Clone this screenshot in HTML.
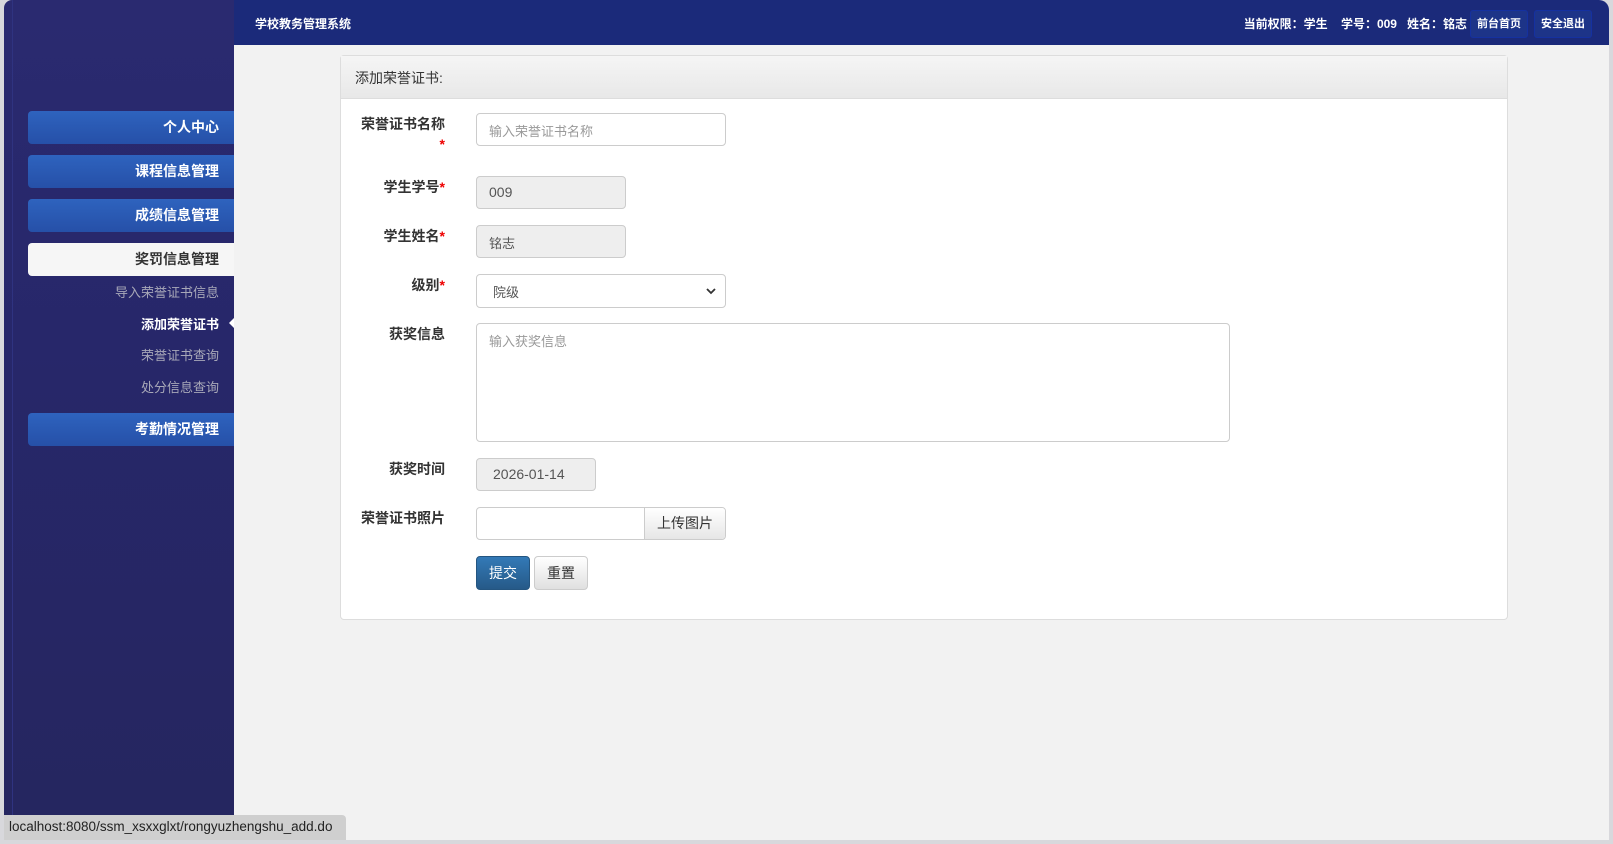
<!DOCTYPE html>
<html><head><meta charset="utf-8">
<style>
*{box-sizing:border-box;margin:0;padding:0}
body{width:1613px;height:844px;overflow:hidden;background:#d8d8dc;font-family:"Liberation Sans","Noto Sans CJK SC",sans-serif;position:relative}
.side{position:absolute;left:4px;top:0;width:230px;height:840px;background:linear-gradient(180deg,#2a2a70 0%,#27276a 40%,#25265f 100%);border-top-left-radius:8px}
.side:before{content:"";position:absolute;left:8px;top:0;bottom:0;width:1px;background:#2f3380}
.main{position:absolute;left:234px;top:0;width:1375px;height:840px;background:#f2f2f2;border-top-right-radius:10px}
.hdr{position:absolute;left:0;top:0;right:0;height:45px;background:#1b2a7a;border-top-right-radius:10px}
.hdr .t{position:absolute;left:21px;top:15px;color:#fff;font-size:12px;font-weight:bold}
.hdr .info{position:absolute;right:142px;top:15px;color:#fff;font-size:12px;font-weight:bold}
.hb{position:absolute;top:10px;height:28px;width:58px;border:1px solid #1531a0;border-radius:3px;background:#1d3488;color:#fff;font-size:11px;font-weight:bold;text-align:center;line-height:26px}
.nb{position:absolute;left:24px;width:206px;height:33px;border-radius:4px 0 0 4px;background:linear-gradient(180deg,#2e63be,#2650a8);color:#fff;font-size:14px;font-weight:bold;text-align:right;padding-right:15px;line-height:33px}
.nb.on{background:#f6f6f6;color:#333}
.sub{position:absolute;right:15px;font-size:13px;color:#a8a8b8;text-align:right}
.sub.on{color:#fff;font-weight:bold}
.panel{position:absolute;left:106px;top:55px;width:1168px;height:565px;background:#fff;border:1px solid #ddd;border-radius:4px}
.ph{height:43px;background:linear-gradient(#f5f5f5,#e8e8e8);border-bottom:1px solid #ddd;font-size:14px;color:#333;padding:12px 14px}
.lb{position:absolute;right:1062px;font-size:14px;font-weight:bold;color:#333;text-align:right}
.st{color:#e00}
.in{position:absolute;left:135px;height:33px;border:1px solid #ccc;border-radius:4px;background:#fff;font-size:14px;color:#555;padding:7px 12px}
.in.ro{background:#eee}
.ph2{color:#999;font-size:13px}
.btn{position:absolute;height:34px;border-radius:4px;font-size:14px;text-align:center;line-height:32px}
.status{position:absolute;left:4px;top:815px;width:342px;height:25px;background:#cfcfcf;border-top-right-radius:4px;font-size:13.5px;color:#222;padding:4px 5px}
</style></head><body>
<div class="side">
<div class="nb" style="top:111px">个人中心</div>
<div class="nb" style="top:155px">课程信息管理</div>
<div class="nb" style="top:199px">成绩信息管理</div>
<div class="nb on" style="top:243px">奖罚信息管理</div>
<div class="sub" style="top:282px">导入荣誉证书信息</div>
<div class="sub on" style="top:314px">添加荣誉证书</div>
<div style="position:absolute;left:225px;top:318px;width:0;height:0;border-top:5px solid transparent;border-bottom:5px solid transparent;border-right:5px solid #fff"></div>
<div class="sub" style="top:345px">荣誉证书查询</div>
<div class="sub" style="top:377px">处分信息查询</div>
<div class="nb" style="top:413px">考勤情况管理</div>
</div>
<div class="main">
<div class="hdr"><div class="t">学校教务管理系统</div>
<div class="info">当前权限：学生 &nbsp;&nbsp; 学号：009 &nbsp;&nbsp;姓名：铭志</div>
<div class="hb" style="left:1236px">前台首页</div>
<div class="hb" style="left:1300px">安全退出</div></div>
<div class="panel">
<div class="ph">添加荣誉证书:</div>
<div class="lb" style="top:58px;line-height:20px">荣誉证书名称<br><span class="st">*</span></div>
<div class="in" style="top:57px;width:250px"><span class="ph2">输入荣誉证书名称</span></div>
<div class="lb" style="top:121px">学生学号<span class="st">*</span></div>
<div class="in ro" style="top:120px;width:150px">009</div>
<div class="lb" style="top:170px">学生姓名<span class="st">*</span></div>
<div class="in ro" style="top:169px;width:150px"><span style="font-size:13px">铭志</span></div>
<div class="lb" style="top:219px">级别<span class="st">*</span></div>
<div class="in" style="top:218px;width:250px;height:34px;padding-left:16px"><span style="font-size:13px">院级</span>
<svg style="position:absolute;right:9px;top:13px" width="10" height="7" viewBox="0 0 10 7"><path d="M1 1l4 4 4-4" stroke="#333" stroke-width="1.8" fill="none"/></svg></div>
<div class="lb" style="top:268px">获奖信息</div>
<div class="in" style="top:267px;width:754px;height:119px"><span class="ph2">输入获奖信息</span></div>
<div class="lb" style="top:403px">获奖时间</div>
<div class="in ro" style="top:402px;width:120px;padding-left:16px">2026-01-14</div>
<div class="lb" style="top:452px">荣誉证书照片</div>
<div class="in" style="top:451px;width:250px;padding:0;overflow:hidden"><div style="position:absolute;left:167px;top:0;right:0;bottom:0;border-left:1px solid #ccc;background:linear-gradient(#fff,#e6e6e6);text-align:center;line-height:31px;color:#333">上传图片</div></div>
<div class="btn" style="left:135px;top:500px;width:54px;background:linear-gradient(#337ab7,#265a88);border:1px solid #245580;color:#fff">提交</div>
<div class="btn" style="left:193px;top:500px;width:54px;background:linear-gradient(#fff,#e0e0e0);border:1px solid #ccc;color:#333">重置</div>
</div>
</div>
<div class="status">localhost:8080/ssm_xsxxglxt/rongyuzhengshu_add.do</div>
</body></html>
